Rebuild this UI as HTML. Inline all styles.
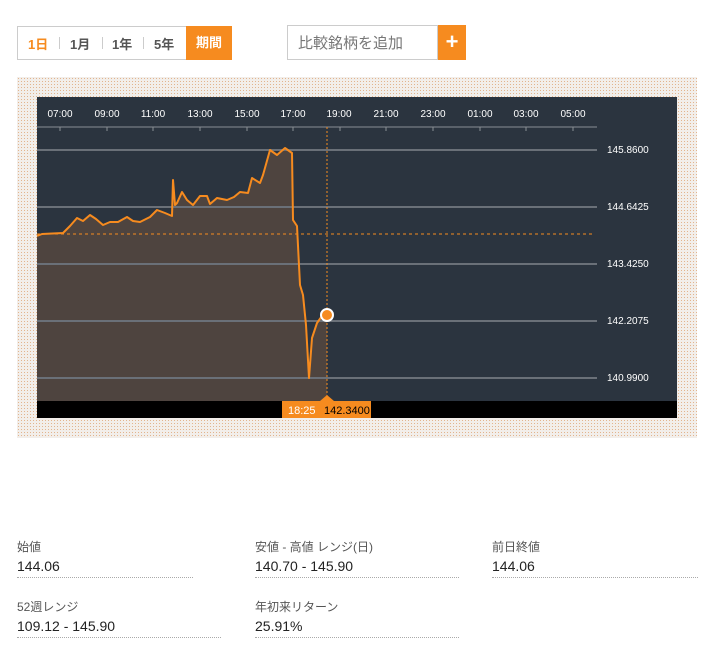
<!DOCTYPE html>
<html><head><meta charset="utf-8"><style>
body{margin:0;width:721px;height:651px;background:#fff;font-family:"Liberation Sans","Noto Sans CJK JP",sans-serif;position:relative;overflow:hidden}
.abs{position:absolute}
.tabs{left:17px;top:26px;width:213px;height:32px;border:1px solid #ccc;}
.tabs span{position:absolute;top:7px;font-size:13px;font-weight:bold;color:#555}
.sep{position:absolute;top:10px;width:1px;height:12px;background:#ccc}
.pd{left:168px;top:-1px;width:46px;height:34px;background:#f68b1f;color:#fff;font-size:13px;font-weight:bold;text-align:center;line-height:34px}
.srch{left:287px;top:25px;width:151px;height:35px;border:1px solid #ccc;font-size:15px;color:#777;line-height:35px;padding-left:10px;box-sizing:border-box}
.plus{left:438px;top:25px;width:28px;height:35px;background:#f68b1f;color:#fff;font-size:22px;font-weight:bold;text-align:center;line-height:34px}
.frame{left:17px;top:77px;width:680px;height:361px;background-color:#f2eeea;background-image:radial-gradient(#e2b48e 0.6px,transparent 0.7px);background-size:3px 3px}
.lbl{font-size:12px;color:#555}
.val{font-size:14px;color:#222}
.ln{height:0;border-bottom:1px dotted #aaa}
</style></head><body>
<div class="abs tabs">
<span style="left:10px;color:#f68b1f">1日</span><div class="sep" style="left:41px"></div>
<span style="left:52px">1月</span><div class="sep" style="left:84px"></div>
<span style="left:94px">1年</span><div class="sep" style="left:125px"></div>
<span style="left:136px">5年</span>
<div class="abs pd">期間</div>
</div>
<div class="abs srch">比較銘柄を追加</div>
<div class="abs plus">+</div>
<div class="abs frame"></div>
<svg class="abs" style="left:0;top:0" width="721" height="651">
<rect x="37" y="97" width="640" height="321" fill="#2b343f"/>
<g fill="#fff" font-size="10" font-family="Liberation Sans,sans-serif" text-anchor="middle">
<text x="60" y="117">07:00</text><text x="107" y="117">09:00</text><text x="153" y="117">11:00</text><text x="200" y="117">13:00</text><text x="247" y="117">15:00</text><text x="293" y="117">17:00</text><text x="339" y="117">19:00</text><text x="386" y="117">21:00</text><text x="433" y="117">23:00</text><text x="480" y="117">01:00</text><text x="526" y="117">03:00</text><text x="573" y="117">05:00</text>
</g>
<line x1="37" y1="127" x2="597" y2="127" stroke="#6a7078" stroke-width="1.5"/>
<g stroke="#8a8f95"><line x1="60" y1="127" x2="60" y2="131"/><line x1="107" y1="127" x2="107" y2="131"/><line x1="153" y1="127" x2="153" y2="131"/><line x1="200" y1="127" x2="200" y2="131"/><line x1="247" y1="127" x2="247" y2="131"/><line x1="293" y1="127" x2="293" y2="131"/><line x1="340" y1="127" x2="340" y2="131"/><line x1="386" y1="127" x2="386" y2="131"/><line x1="433" y1="127" x2="433" y2="131"/><line x1="480" y1="127" x2="480" y2="131"/><line x1="526" y1="127" x2="526" y2="131"/><line x1="573" y1="127" x2="573" y2="131"/></g>
<polygon fill="#4e443f" points="37,236 42,234 63,233 70,226 77,218 83,221 90,215 96,219 103,225 110,222 118,222 127,217 133,221 140,222 150,217 157,210 165,213 172,216 173,180 175,205 177,203 182,192 187,200 193,205 200,196 207,196 210,204 217,198 227,200 234,197 240,192 248,193 252,178 260,183 263,175 270,150 277,155 285,148 292,153 293,220 297,226 300,285 303,295 306,325 309,378 312,338 317,323 322,316 327,314 327,401 37,401"/>
<g stroke="#6a7078" stroke-width="2"><line x1="37" y1="150" x2="597" y2="150"/><line x1="37" y1="207" x2="597" y2="207"/><line x1="37" y1="264" x2="597" y2="264"/><line x1="37" y1="321" x2="597" y2="321"/><line x1="37" y1="378" x2="597" y2="378"/></g>
<g fill="#fff" font-size="10" font-family="Liberation Sans,sans-serif"><text x="607" y="153">145.8600</text><text x="607" y="210">144.6425</text><text x="607" y="267">143.4250</text><text x="607" y="324">142.2075</text><text x="607" y="381">140.9900</text></g>
<line x1="37" y1="234" x2="595" y2="234" stroke="#f68b1f" stroke-dasharray="3,3"/>
<line x1="327" y1="127" x2="327" y2="401" stroke="#f68b1f" stroke-dasharray="2,2"/>
<polyline fill="none" stroke="#f68b1f" stroke-width="2" stroke-linejoin="round" points="37,236 42,234 63,233 70,226 77,218 83,221 90,215 96,219 103,225 110,222 118,222 127,217 133,221 140,222 150,217 157,210 165,213 172,216 173,180 175,205 177,203 182,192 187,200 193,205 200,196 207,196 210,204 217,198 227,200 234,197 240,192 248,193 252,178 260,183 263,175 270,150 277,155 285,148 292,153 293,220 297,226 300,285 303,295 306,325 309,378 312,338 317,323 322,316 327,314"/>
<circle cx="327" cy="315" r="6" fill="#f68b1f" stroke="#fff" stroke-width="2"/>
<rect x="37" y="401" width="640" height="17" fill="#000"/>
<rect x="282" y="401" width="89" height="17" fill="#f68b1f"/>
<polygon points="320,401 327,395 334,401" fill="#f68b1f"/>
<text x="288" y="414" font-size="11" fill="#fff" font-family="Liberation Sans,sans-serif">18:25</text>
<text x="324" y="414" font-size="11" fill="#000" font-family="Liberation Sans,sans-serif">142.3400</text>
</svg>
<div class="abs lbl" style="left:17px;top:538px">始値</div>
<div class="abs val" style="left:17px;top:558px">144.06</div>
<div class="abs ln" style="left:17px;top:577px;width:176px"></div>
<div class="abs lbl" style="left:255px;top:538px">安値 - 高値 レンジ(日)</div>
<div class="abs val" style="left:255px;top:558px">140.70 - 145.90</div>
<div class="abs ln" style="left:255px;top:577px;width:204px"></div>
<div class="abs lbl" style="left:492px;top:538px">前日終値</div>
<div class="abs val" style="left:492px;top:558px">144.06</div>
<div class="abs ln" style="left:492px;top:577px;width:206px"></div>
<div class="abs lbl" style="left:17px;top:598px">52週レンジ</div>
<div class="abs val" style="left:17px;top:618px">109.12 - 145.90</div>
<div class="abs ln" style="left:17px;top:637px;width:204px"></div>
<div class="abs lbl" style="left:255px;top:598px">年初来リターン</div>
<div class="abs val" style="left:255px;top:618px">25.91%</div>
<div class="abs ln" style="left:255px;top:637px;width:204px"></div>
</body></html>
